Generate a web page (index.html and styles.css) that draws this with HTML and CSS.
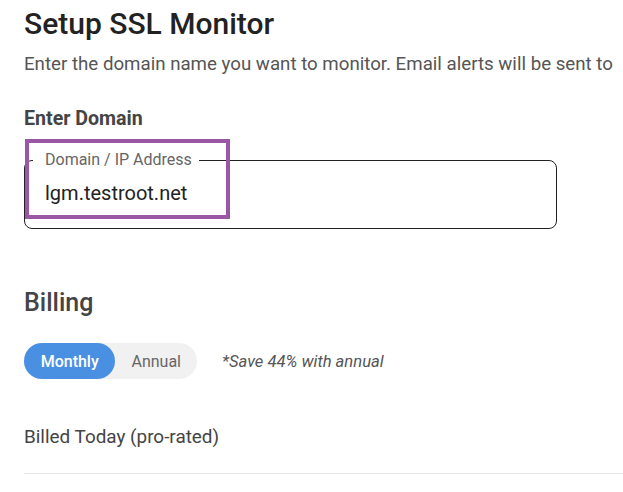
FILE: index.html
```html
<!DOCTYPE html>
<html lang="en">
<head>
<meta charset="utf-8">
<title>Setup SSL Monitor</title>
<link rel="stylesheet" href="styles.css">
</head>
<body>
<main class="page">
  <h1 class="title">Setup SSL Monitor</h1>
  <p class="subtitle">Enter the domain name you want to monitor. Email alerts will be sent to</p>

  <h2 class="section-label">Enter Domain</h2>
  <div class="field-wrap">
    <fieldset class="field">
      <legend class="field-legend">Domain / IP Address</legend>
      <input class="field-input" type="text" value="lgm.testroot.net" aria-label="Domain / IP Address">
    </fieldset>
    <div class="highlight"></div>
  </div>

  <h2 class="section-title">Billing</h2>
  <div class="billing-row">
    <div class="toggle">
      <span class="toggle-opt active">Monthly</span>
      <span class="toggle-opt">Annual</span>
    </div>
    <span class="save-note">*Save 44% with annual</span>
  </div>

  <div class="billed-row">Billed Today (pro-rated)</div>
</main>
</body>
</html>
```

FILE: styles.css
```css
html, body {
  margin: 0;
  padding: 0;
  background: #ffffff;
  overflow: hidden;
}

body {
  font-family: Roboto, "Liberation Sans", Arial, sans-serif;
  color: #222;
}

.page {
  padding-left: 24px;
}

.title {
  margin: 6px 0 0;
  font-size: 30px;
  line-height: 36px;
  font-weight: 500;
  color: #222;
}

.subtitle {
  margin: 10px 0 0;
  font-size: 18.7px;
  line-height: 24px;
  color: #555;
  white-space: nowrap;
}

.section-label {
  margin: 31px 0 0;
  font-size: 19.6px;
  line-height: 24px;
  font-weight: 700;
  color: #444;
}

.field-wrap {
  position: relative;
  margin-top: 20px;
  width: 533px;
}

.field {
  margin: 0;
  padding: 0 0 23px 8px;
  border: 1px solid #222;
  border-radius: 8px;
  min-width: 0;
}

.field-legend {
  padding: 0 7px 0 12px;
  font-size: 16px;
  line-height: 18px;
  color: #666;
}

.field-input {
  display: block;
  margin: 12px 0 0;
  padding: 0 0 0 12px;
  border: 0;
  outline: none;
  background: transparent;
  font-family: inherit;
  font-size: 20px;
  line-height: 24px;
  height: 24px;
  color: #222;
  width: 400px;
}

.highlight {
  position: absolute;
  left: 1px;
  top: -12px;
  width: 197px;
  height: 72px;
  border: 4px solid #9a58a4;
  pointer-events: none;
}

.section-title {
  margin: 59px 0 0;
  font-size: 25px;
  line-height: 30px;
  font-weight: 500;
  color: #444;
}

.billing-row {
  display: flex;
  align-items: center;
  gap: 25px;
  margin-top: 25px;
}

.toggle {
  display: flex;
  background: #f1f1f1;
  border-radius: 18px;
  height: 36px;
  width: 173px;
}

.toggle-opt {
  display: flex;
  align-items: center;
  justify-content: center;
  font-size: 16px;
  color: #666;
  padding: 1px 16px 0;
}

.toggle-opt.active {
  background: #4a90e2;
  color: #fff;
  font-weight: 500;
  border-radius: 18px;
  width: 92px;
  box-sizing: border-box;
  padding: 1px 0 0;
}

.save-note {
  font-size: 16.6px;
  font-style: italic;
  color: #555;
  padding-top: 1px;
}

.billed-row {
  margin-top: 46px;
  padding-bottom: 24px;
  border-bottom: 1px solid #e6e6e6;
  font-size: 18.9px;
  line-height: 24px;
  color: #444;
}
```
